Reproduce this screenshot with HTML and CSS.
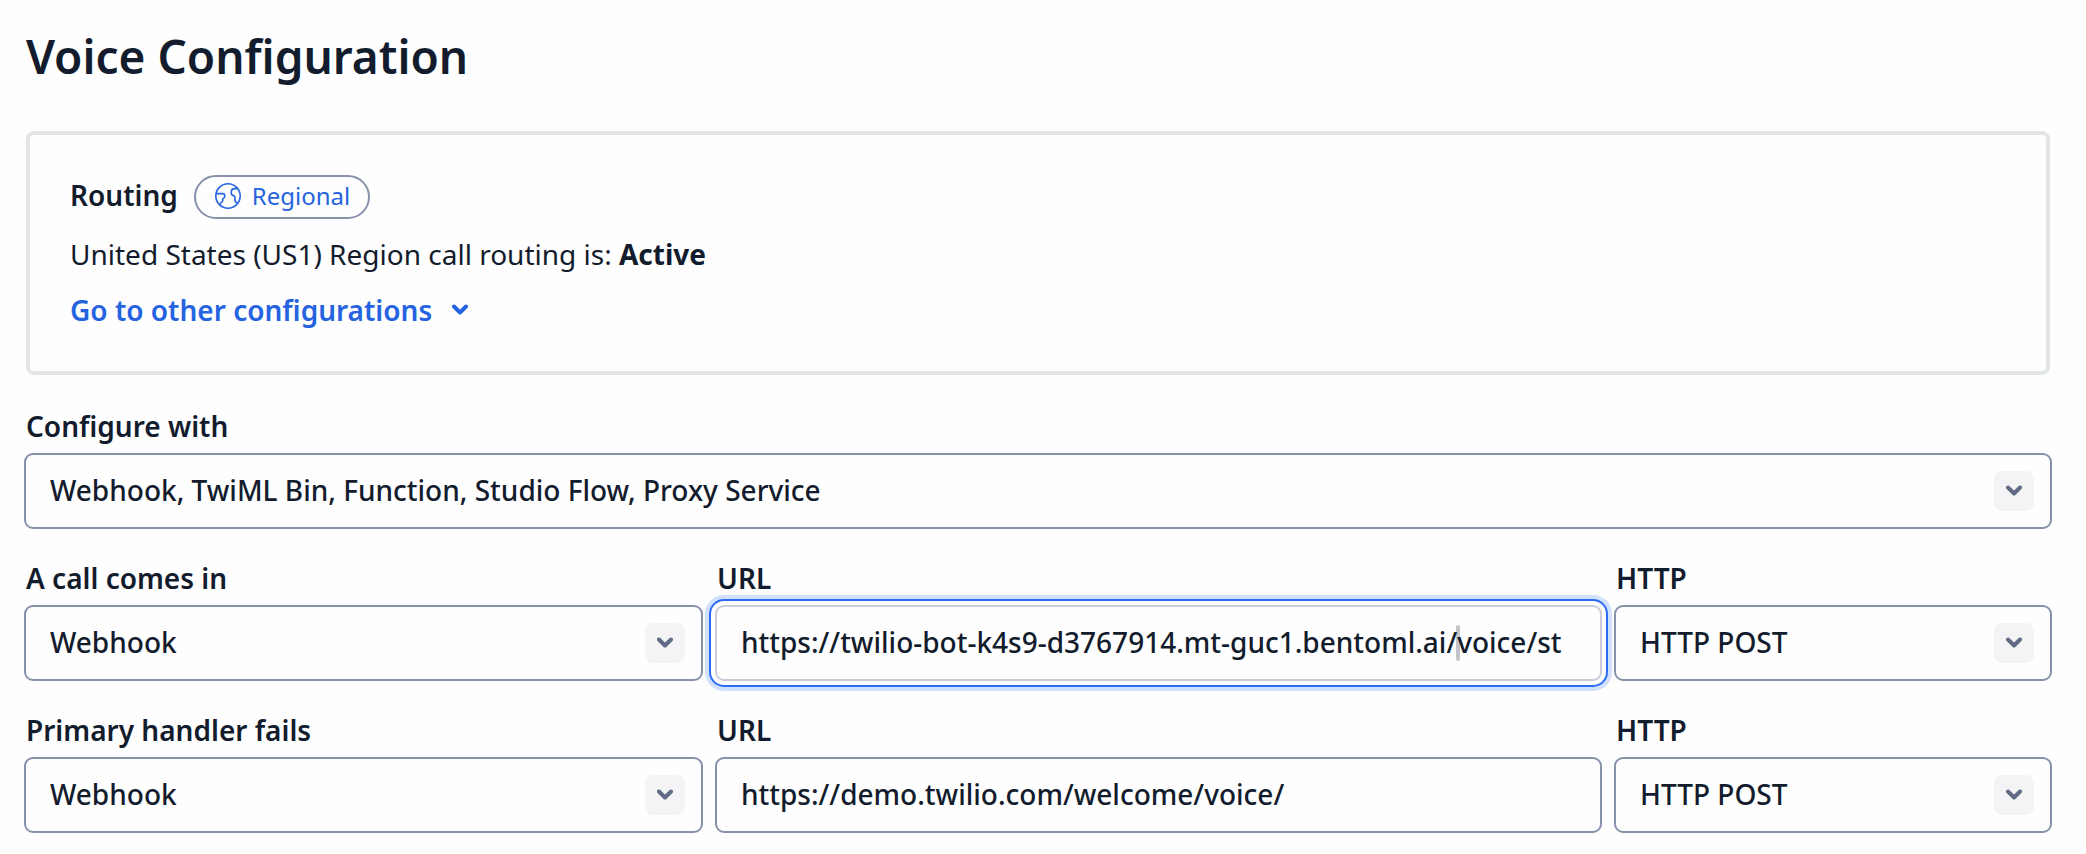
FILE: index.html
```html
<!DOCTYPE html>
<html lang="en">
<head>
<meta charset="utf-8">
<meta name="viewport" content="width=device-width, initial-scale=1">
<title>Voice Configuration</title>
<link rel="stylesheet" href="styles.css">
</head>
<body>
<main class="page">
  <h1 class="title">Voice Configuration</h1>

  <section class="card">
    <div class="routing">
      <h2 class="routing-title">Routing</h2>
      <span class="pill">
        <svg class="globe" viewBox="0 0 28 28" aria-hidden="true">
          <circle cx="14" cy="14" r="12.2"/>
          <path d="M2 11.600h7c1.200 0 1.800.9 1.700 2v1c0 1.600-2 1.500-2 3v1.200c0 1.400-2.700 1.400-2.700 4"/>
          <path d="M23.200 6.600h-2.400c-2.200 0-3.500 1.200-3.500 3.300v1.200c0 1.600.9 2.300 2.100 2.500 1.100.2 1.500.7 1.500 1.700v2c0 1.700.5 3.300 2.400 3.500"/>
        </svg>
        Regional
      </span>
    </div>
    <p class="status">United States (US1) Region call routing is: <strong>Active</strong></p>
    <button class="more" type="button">
      Go to other configurations
      <svg class="chevron" viewBox="0 0 16 12" aria-hidden="true"><path d="M2 2.500l6 6 6-6"/></svg>
    </button>
  </section>

  <form class="form">
    <div class="field">
      <label class="label" for="configure">Configure with</label>
      <div class="select">
        <select class="control" id="configure"><option>Webhook, TwiML Bin, Function, Studio Flow, Proxy Service</option></select>
        <span class="arrow"><svg class="chevron" viewBox="0 0 16 12" aria-hidden="true"><path d="M2 2.500l6 6 6-6"/></svg></span>
      </div>
    </div>

    <div class="row">
      <div class="field">
        <label class="label" for="call">A call comes in</label>
        <div class="select">
          <select class="control" id="call"><option>Webhook</option></select>
          <span class="arrow"><svg class="chevron" viewBox="0 0 16 12" aria-hidden="true"><path d="M2 2.500l6 6 6-6"/></svg></span>
        </div>
      </div>
      <div class="field">
        <label class="label" for="call-url">URL</label>
        <div class="edit">
          <input class="control focused" id="call-url" type="text" value="https://twilio-bot-k4s9-d3767914.mt-guc1.bentoml.ai/voice/st">
          <span class="caret"></span>
        </div>
      </div>
      <div class="field">
        <label class="label" for="call-http">HTTP</label>
        <div class="select">
          <select class="control" id="call-http"><option>HTTP POST</option></select>
          <span class="arrow"><svg class="chevron" viewBox="0 0 16 12" aria-hidden="true"><path d="M2 2.500l6 6 6-6"/></svg></span>
        </div>
      </div>
    </div>

    <div class="row">
      <div class="field">
        <label class="label" for="fail">Primary handler fails</label>
        <div class="select">
          <select class="control" id="fail"><option>Webhook</option></select>
          <span class="arrow"><svg class="chevron" viewBox="0 0 16 12" aria-hidden="true"><path d="M2 2.500l6 6 6-6"/></svg></span>
        </div>
      </div>
      <div class="field">
        <label class="label" for="fail-url">URL</label>
        <input class="control" id="fail-url" type="text" value="https://demo.twilio.com/welcome/voice/">
      </div>
      <div class="field">
        <label class="label" for="fail-http">HTTP</label>
        <div class="select">
          <select class="control" id="fail-http"><option>HTTP POST</option></select>
          <span class="arrow"><svg class="chevron" viewBox="0 0 16 12" aria-hidden="true"><path d="M2 2.500l6 6 6-6"/></svg></span>
        </div>
      </div>
    </div>
  </form>
</main>
</body>
</html>
```

FILE: styles.css
```css
* {
  box-sizing: border-box;
}

body {
  margin: 0;
  background: #fefefe;
  color: #121c2d;
  font-family: "Noto Sans", "Open Sans", sans-serif;
  font-size: 28px;
  line-height: 40px;
}

.page {
  padding: 24px 34px 20px 24px;
}

.title {
  margin: 0 2px 43px;
  font-size: 46px;
  line-height: 64px;
  font-weight: 600;
}

.card {
  margin: 0 2px 31px;
  padding: 40px;
  border: 4px solid #e2e6e8;
  border-radius: 8px;
}

.routing {
  display: flex;
  align-items: flex-start;
  gap: 16px;
}

.routing-title {
  margin: 0;
  font-size: 28px;
  line-height: 40px;
  font-weight: 600;
}

.pill {
  display: flex;
  align-items: center;
  gap: 10px;
  height: 44px;
  padding: 0 18px 2px;
  border: 2px solid #8891aa;
  border-radius: 22px;
  color: #2563e0;
  font-size: 24px;
  font-weight: 400;
}

.globe {
  width: 28px;
  height: 28px;
  fill: none;
  stroke: currentColor;
  stroke-width: 1.600;
  stroke-linejoin: round;
}

.status {
  margin: 15px 0 16px;
}

.status strong {
  font-weight: 700;
}

.more {
  display: flex;
  align-items: center;
  gap: 20px;
  margin-bottom: 1px;
  padding: 0;
  border: 0;
  background: none;
  color: #2563e0;
  font: inherit;
  font-weight: 600;
}

.chevron {
  width: 16px;
  height: 12px;
  fill: none;
  stroke: currentColor;
  stroke-width: 4;
  stroke-linecap: round;
  stroke-linejoin: round;
}

.form {
  display: grid;
  gap: 29px;
}

.row {
  display: grid;
  grid-template-columns: 679fr 887fr 438fr;
  gap: 12px;
}

.field {
  min-width: 0;
}

.label {
  display: block;
  padding: 0 2px;
  margin-bottom: 7px;
  font-weight: 600;
}

.control {
  display: block;
  width: 100%;
  height: 76px;
  padding: 0 24px 2px;
  border: 2px solid #8891aa;
  border-radius: 9px;
  background: #fefefe;
  color: inherit;
  font: inherit;
  font-weight: 500;
  appearance: none;
  outline: none;
}

.focused {
  border-color: #cacdd8;
  box-shadow: 0 0 0 4px #fefefe, 0 0 0 6px #2b6cf6, 0 0 0 10px #d1e1fb;
}

.select,
.edit {
  position: relative;
}

.arrow {
  position: absolute;
  top: 18px;
  right: 18px;
  display: grid;
  place-items: center;
  width: 40px;
  height: 40px;
  border-radius: 8px;
  background: #f4f4f6;
  color: #606b85;
  pointer-events: none;
}

.caret {
  position: absolute;
  top: 20px;
  right: 142px;
  width: 4px;
  height: 36px;
  border-radius: 2px;
  background: #121c2d40;
  pointer-events: none;
}
```
